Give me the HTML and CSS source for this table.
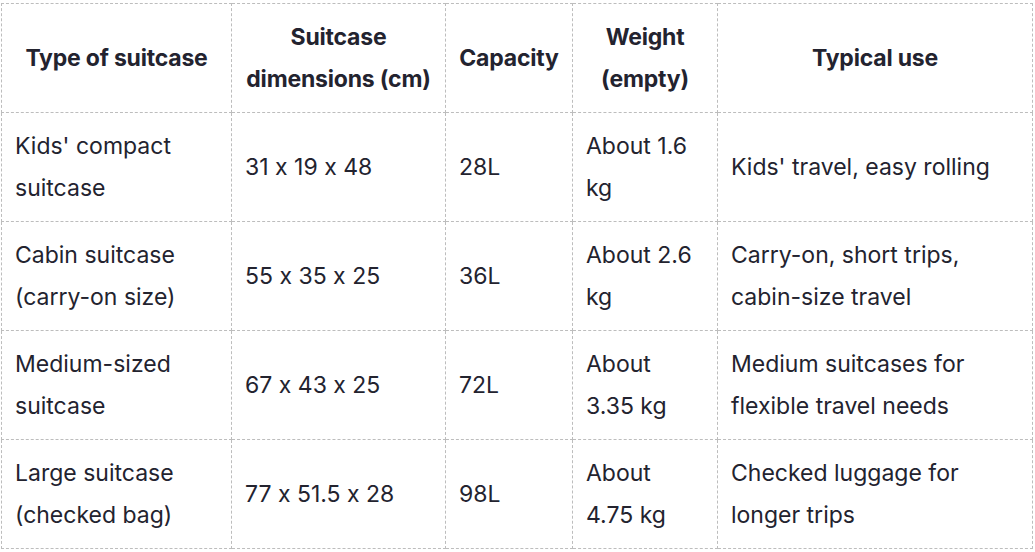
FILE: index.html
```html
<!DOCTYPE html>
<html>
<head>
<meta charset="utf-8">
<link rel="stylesheet" href="styles.css">
</head>
<body>
<div class="wrap">
<table class="spec">
  <colgroup>
    <col class="c1"><col class="c2"><col class="c3"><col class="c4"><col class="c5">
  </colgroup>
  <thead>
    <tr>
      <th>Type of suitcase</th>
      <th>Suitcase dimensions (cm)</th>
      <th>Capacity</th>
      <th>Weight (empty)</th>
      <th>Typical use</th>
    </tr>
  </thead>
  <tbody>
    <tr>
      <td>Kids' compact suitcase</td>
      <td>31 x 19 x 48</td>
      <td>28L</td>
      <td>About 1.6 kg</td>
      <td>Kids' travel, easy rolling</td>
    </tr>
    <tr>
      <td>Cabin suitcase (carry-on size)</td>
      <td>55 x 35 x 25</td>
      <td>36L</td>
      <td>About 2.6 kg</td>
      <td>Carry-on, short trips, cabin-size travel</td>
    </tr>
    <tr>
      <td>Medium-sized suitcase</td>
      <td>67 x 43 x 25</td>
      <td>72L</td>
      <td>About 3.35&nbsp;kg</td>
      <td>Medium suitcases for flexible travel needs</td>
    </tr>
    <tr>
      <td>Large suitcase (checked bag)</td>
      <td>77 x 51.5 x 28</td>
      <td>98L</td>
      <td>About 4.75&nbsp;kg</td>
      <td>Checked luggage for longer trips</td>
    </tr>
  </tbody>
</table>
</div>
</body>
</html>
```
FILE: styles.css
```css
html, body {
  margin: 0;
  padding: 0;
  background: #ffffff;
}
.wrap {
  padding: 3px 0 0 1px;
}
.spec {
  border-collapse: collapse;
  table-layout: fixed;
  width: 1031px;
  font-family: Inter, "Noto Sans", sans-serif;
  font-feature-settings: "calt" 0;
  font-size: 23px;
  line-height: 42px;
  color: #23232f;
}
.c1 { width: 230px; }
.c2 { width: 214px; }
.c3 { width: 127px; }
.c4 { width: 145px; }
.c5 { width: 315px; }
.spec th, .spec td {
  border: 1px dashed #bdbdbd;
  padding: 12px 13px;
  vertical-align: middle;
  height: 84px;
}
.spec th {
  font-weight: 700;
  text-align: center;
  padding: 12px 2px;
  letter-spacing: -0.2px;
}
.spec td {
  text-align: left;
}
```
